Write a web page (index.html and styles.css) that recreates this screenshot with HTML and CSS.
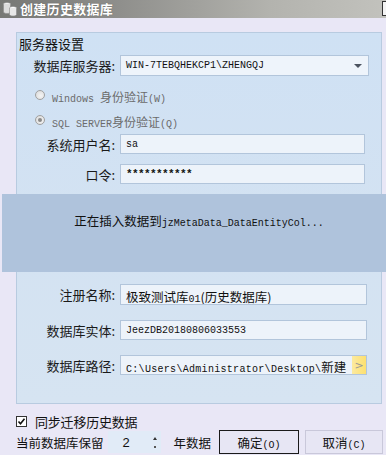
FILE: index.html
```html
<!DOCTYPE html>
<html lang="zh">
<head>
<meta charset="utf-8">
<link rel="stylesheet" href="styles.css">
</head>
<body>
<div class="window">
  <div class="titlebar">
    <svg class="app-icon" width="16" height="16" viewBox="0 0 16 16">
      <ellipse cx="5" cy="3" rx="3.5" ry="1.5" fill="#f4f4f4" stroke="#8a8a8a" stroke-width="0.6"/>
      <path d="M1.5 3v8c0 .8 1.6 1.5 3.5 1.5s3.5-.7 3.5-1.5V3" fill="#dcdcdc" stroke="#8a8a8a" stroke-width="0.6"/>
      <ellipse cx="11" cy="7" rx="3.5" ry="1.5" fill="#ffffff" stroke="#8a8a8a" stroke-width="0.6"/>
      <path d="M7.5 7v6.5c0 .8 1.6 1.5 3.5 1.5s3.5-.7 3.5-1.5V7" fill="#e8e8e8" stroke="#8a8a8a" stroke-width="0.6"/>
    </svg>
    <span class="title">创建历史数据库</span>
    <div class="close"></div>
  </div>
  <div class="content">
    <div class="group">
      <div class="group-title">服务器设置</div>
      <div class="row">
        <span class="label">数据库服务器:</span>
        <div class="field combo w-combo"><span class="mono">WIN-7TEBQHEKCP1\ZHENGQJ</span><span class="arrow"></span></div>
      </div>
      <div class="radio-row first">
        <span class="radio"></span><span class="rtext"><span class="mono dis">Windows&nbsp;</span><span class="cjk dis">身份验证</span><span class="mono dis">(W)</span></span>
      </div>
      <div class="radio-row">
        <span class="radio on"></span><span class="rtext"><span class="mono dis">SQL SERVER</span><span class="cjk dis">身份验证</span><span class="mono dis">(Q)</span></span>
      </div>
      <div class="row gap5">
        <span class="label">系统用户名:</span>
        <div class="field w-user"><span class="mono">sa</span></div>
      </div>
      <div class="row gap10">
        <span class="label">口令:</span>
        <div class="field w-user"><span class="mono pw">***********</span></div>
      </div>
      <div class="spacer"></div>
      <div class="row">
        <span class="label">注册名称:</span>
        <div class="field w-low"><span class="ftext"><span class="cjk">极致测试库</span><span class="mono">01</span><span class="cjk">(历史数据库)</span></span></div>
      </div>
      <div class="row gap15">
        <span class="label">数据库实体:</span>
        <div class="field w-low"><span class="mono">JeezDB20180806033553</span></div>
      </div>
      <div class="row gap15">
        <span class="label">数据库路径:</span>
        <div class="field w-low path"><span class="path-text"><span class="mono wide">C:\Users\Administrator\Desktop\</span><span class="cjk">新建</span></span><span class="browse">&gt;</span></div>
      </div>
    </div>
    <div class="overlay"><span class="otext"><span class="cjk">正在插入数据到</span><span class="mono">jzMetaData_DataEntityCol...</span></span></div>
    <div class="check-row">
      <span class="checkbox">
        <svg width="9" height="9" viewBox="0 0 9 9"><path d="M1.5 4.5l2 2.2 4-5" fill="none" stroke="#111" stroke-width="1.6"/></svg>
      </span>
      <span class="check-text">同步迁移历史数据</span>
    </div>
    <div class="bottom">
      <span class="btxt">当前数据库保留</span>
      <div class="spin"><span class="spin-val">2</span><span class="spin-arrows"><span class="up"></span><span class="down"></span></span></div>
      <span class="btxt year">年数据</span>
      <button class="btn default"><span class="btext"><span class="cjk">确定</span><span class="mono">(O)</span></span></button>
      <button class="btn"><span class="btext"><span class="cjk">取消</span><span class="mono">(C)</span></span></button>
    </div>
  </div>
</div>
</body>
</html>
```

FILE: styles.css
```css
* { box-sizing: border-box; }
html, body { margin: 0; padding: 0; }
body {
  width: 386px;
  height: 455px;
  overflow: hidden;
  background: #e9e7f6;
  font-family: "Noto Sans CJK SC", "DejaVu Sans", sans-serif;
  color: #111;
}
.window { position: relative; width: 386px; height: 455px; }
.titlebar {
  height: 18px;
  display: flex;
  align-items: center;
  background: linear-gradient(to right, #777875 0%, #8e8e8b 30%, #b3b3ae 70%, #c2c2bd 100%);
  position: relative;
}
.app-icon { margin-left: 2px; margin-right: 2px; }
.title {
  color: #fff;
  font-weight: bold;
  font-size: 13px;
  line-height: 18px;
  letter-spacing: 0.3px;
  text-shadow: 0 0 1px #555;
}
.close {
  position: absolute;
  right: 0; top: 1px;
  width: 4px; height: 15px;
  border: 1px solid #333;
  border-right: none;
  background: #f4f4f4;
}
.content { padding: 14px 0 0 16px; }
.group {
  width: 366px;
  height: 372px;
  border: 1px solid #b8cbe0;
  background: linear-gradient(to bottom, #cfe1f4 0%, #d3e2f2 50%, #d6e4f2 100%);
  display: flex;
  flex-direction: column;
}
.group-title {
  height: 22px;
  font-size: 13px;
  line-height: 22px;
  padding-left: 2px;
  color: #111;
}
.row { display: flex; align-items: center; height: 21px; }
.row.gap5 { margin-top: 4px; height: 20px; }
.row.gap10 { margin-top: 10px; height: 20px; }
.row.gap15 { margin-top: 15px; height: 20px; }
.label {
  width: 98px;
  text-align: right;
  font-size: 13px;
  color: #1a1a1a;
  margin-right: 5px;
  white-space: nowrap;
}
.field {
  height: 100%;
  background: #edf3fa;
  border: 1px solid #b2c5db;
  display: flex;
  align-items: center;
  padding-left: 5px;
  overflow: hidden;
  white-space: nowrap;
}
.w-combo { width: 249px; background: #eef4fb; }
.w-user { width: 245px; }
.w-low { width: 247px; }
.mono { font-family: "Liberation Mono", "DejaVu Sans Mono", monospace; font-size: 10px; }
.mono.wide { letter-spacing: 0.3px; }
.cjk { font-family: "Noto Sans CJK SC", sans-serif; font-size: 12.5px; }
.pw { font-size: 11px; letter-spacing: -0.6px; font-weight: bold; }
.combo { position: relative; justify-content: space-between; padding-right: 6px; }
.arrow {
  width: 0; height: 0;
  border-left: 4px solid transparent;
  border-right: 4px solid transparent;
  border-top: 4px solid #4b5360;
}
.radio-row {
  display: flex;
  align-items: center;
  height: 20px;
  margin-top: 5px;
  padding-left: 18px;
}
.radio-row.first { margin-top: 9px; }
.rtext { white-space: nowrap; }
.dis { color: #6b6b6b; }
.radio-row .cjk { font-size: 12px; }
.radio {
  width: 10px; height: 10px;
  border-radius: 50%;
  border: 1px solid #a0a0a0;
  background: radial-gradient(circle at 60% 60%, #f4f4f4 0%, #d8d8d8 100%);
  margin-right: 7px;
  display: flex; align-items: center; justify-content: center;
}
.radio.on::after {
  content: "";
  width: 4px; height: 4px; border-radius: 50%;
  background: #8a8a8a;
}
.spacer { height: 100px; flex: none; }
.path { padding-right: 0; justify-content: space-between; }
.path-text { overflow: hidden; white-space: nowrap; }
.browse {
  width: 14px;
  height: 100%;
  flex: none;
  background: linear-gradient(to right, #fbeaa0, #fde070);
  color: #999;
  font-family: "DejaVu Sans", sans-serif;
  font-size: 11px;
  display: flex; align-items: center; justify-content: center;
}
.overlay {
  position: absolute;
  left: 2px; right: 0;
  top: 194px;
  height: 78px;
  background: #afc3dc;
  display: flex;
  justify-content: center;
  align-items: flex-start;
  padding-left: 10px;
  padding-top: 16px;
  white-space: nowrap;
}
.otext { line-height: 18px; }
.overlay .cjk { font-size: 12.5px; }
.overlay .mono { font-size: 10px; }
.check-row {
  display: flex;
  align-items: center;
  height: 16px;
  margin-top: 9px;
}
.checkbox {
  width: 11px; height: 11px;
  border: 1px solid #333;
  background: #fff;
  display: flex; align-items: center; justify-content: center;
  margin-right: 8px;
}
.check-text { font-size: 13px; color: #111; letter-spacing: -0.2px; }
.bottom {
  display: flex;
  align-items: center;
  height: 24px;
  margin-top: 1px;
}
.btxt { font-size: 12.5px; color: #111; }
.spin {
  width: 53px; height: 22px;
  margin-left: 4px;
  background: #e1ebf7;
  display: flex; align-items: center; justify-content: space-between;
  padding: 0 4px 0 15px;
}
.spin-val { font-family: "Liberation Sans", sans-serif; font-size: 13px; }
.spin-arrows { display: flex; flex-direction: column; align-items: center; gap: 6px; }
.up { width: 0; height: 0; border-left: 2px solid transparent; border-right: 2px solid transparent; border-bottom: 3px solid #333; }
.down { width: 2px; height: 2px; background: #555; }
.year { margin-left: 13px; }
.btn {
  height: 24px;
  width: 78px;
  margin: 0 0 0 6px;
  background: #e7e6f4;
  border: 1px solid #c9c8da;
  display: flex; align-items: center; justify-content: center;
  padding: 0;
  color: #111;
  font-family: "Noto Sans CJK SC", sans-serif;
}
.btn.default { border: 1px solid #1a1a1a; margin-left: 8px; width: 80px; }
.btext { white-space: nowrap; }
.btn .cjk { font-size: 12.5px; }
.btn .mono { font-size: 10px; }
```
